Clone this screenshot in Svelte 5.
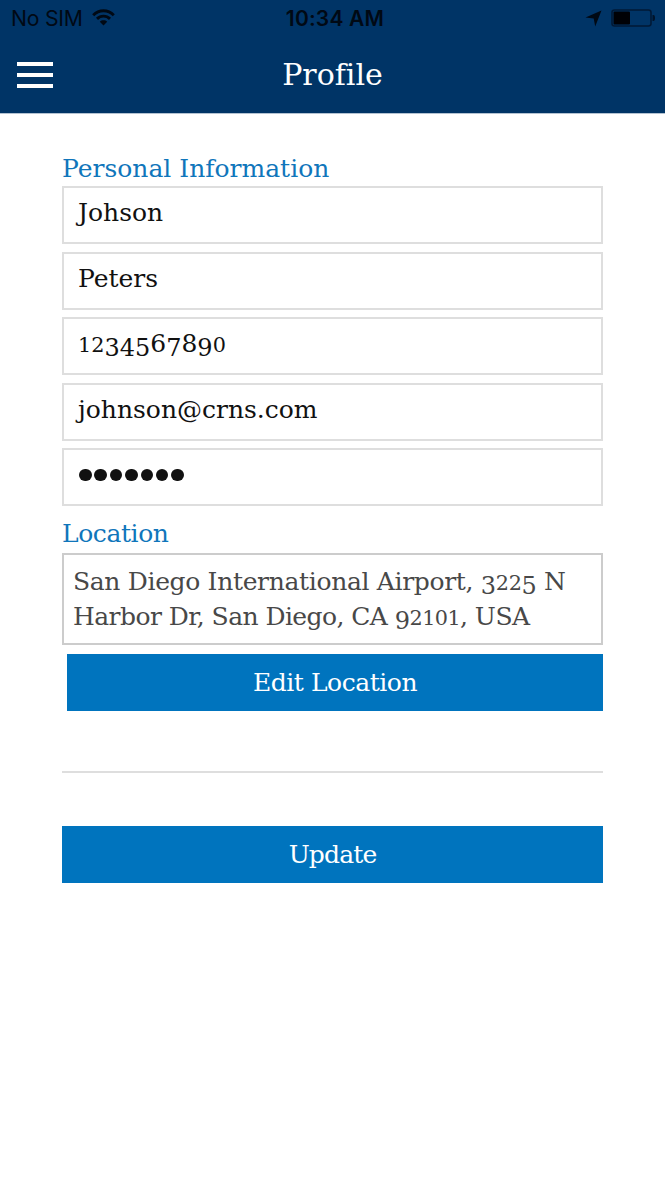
<script>
  const fields = ['Johson', 'Peters', '1234567890', 'johnson@crns.com'];
  const address = [
    { text: 'San Diego International Airport, 3225 N', spacing: -0.33 },
    { text: 'Harbor Dr, San Diego, CA 92101, USA', spacing: -0.56 },
  ];
  const dots = Array.from({ length: 7 });

  // Old-style figures: short 0-2, descending 3, 4, 5, 7 and 9.
  const kind = (c) => ('012'.includes(c) ? 'short' : '34579'.includes(c) ? 'low' : '68'.includes(c) ? 'tall' : '');
  const runs = (text) => text.match(/\d|\D+/g);
</script>

{#snippet figures(text)}{#each runs(text) as run}{#if kind(run[0]) && run.length === 1}<span class="digit {kind(run)}">{run}</span>{:else}{run}{/if}{/each}{/snippet}

<div class="screen">
  <header>
    <div class="status">
      <div class="carrier">
        <span>No SIM</span>
        <svg width="23" height="17" viewBox="0 0 23 17" fill="none" stroke="#000914" stroke-width="2.9">
          <path d="M1.200 6.200C7 .3 16 .3 21.800 6.200" />
          <path d="M5 9.900c3.700-3.700 9.300-3.700 13 0" />
          <path d="M11.500 16.400l-3.700-3.700c2-1.900 5.400-1.900 7.400 0z" fill="#000914" stroke="none" />
        </svg>
      </div>
      <time>10:34 AM</time>
      <div class="power">
        <svg width="17" height="17" viewBox="0 0 17 17"><path d="M16.500 .5L10.200 16.500 8.700 8.600 .5 7.600z" fill="#000914" /></svg>
        <svg width="44" height="18" viewBox="0 0 44 18">
          <rect x="1" y="1" width="39" height="16" rx="2.500" fill="none" stroke="#001936" stroke-width="1.600" />
          <rect x="2.500" y="2.500" width="16.500" height="13" rx="1" fill="#000106" />
          <path d="M41.500 6h1q1.500 0 1.500 3t-1.500 3h-1z" fill="#001329" />
        </svg>
      </div>
    </div>
    <div class="bar">
      <button class="menu" aria-label="Menu"><i></i><i></i><i></i></button>
      <h1>Profile</h1>
    </div>
  </header>

  <main>
    <h2 class="personal">Personal Information</h2>
    <div class="fields">
      {#each fields as text}
        <div class="field">{@render figures(text)}</div>
      {/each}
      <div class="field password">{#each dots as _}<i></i>{/each}</div>
    </div>
    <h2 class="location">Location</h2>
    <div class="address">
      {#each address as line}<div style="letter-spacing: {line.spacing}px">{@render figures(line.text)}</div>{/each}
    </div>
    <button class="action edit">Edit Location</button>
    <hr />
    <button class="action update">Update</button>
  </main>
</div>

<style>
  :global(body) { background: #fff; }
  .screen {
    width: 665px; height: 1182px; overflow: hidden; background: #fff;
    font-family: "DejaVu Serif", serif; font-size: 25px;
  }
  header { height: 114px; background: #003466; border-bottom: 1px solid #b3c2d1; box-sizing: border-box; }
  .status {
    height: 37px; display: grid; grid-template-columns: 1fr auto 1fr; align-items: center;
    padding: 0 10px 0 11px; box-sizing: border-box; color: #000914;
    font: 21.200px/37px Inter, sans-serif;
  }
  .carrier { display: flex; align-items: center; gap: 9px; letter-spacing: -0.250px; }
  .carrier svg { position: relative; top: -1px; }
  time { font-weight: 600; font-size: 21px; letter-spacing: 0.200px; padding-left: 4px; }
  .power { display: flex; justify-content: flex-end; align-items: center; gap: 9px; position: relative; top: -0.5px; }
  .bar { height: 76px; display: grid; grid-template-columns: 1fr auto 1fr; align-items: center; color: #fff; }
  button { border: 0; padding: 0; font: inherit; color: #fff; }
  .menu { width: 36px; margin-left: 17.400px; display: grid; gap: 6.700px; background: none; }
  .menu i { height: 4px; background: #fff; }
  h1 { margin: 0; font-size: 30px; font-weight: 400; line-height: 74px; font-variant-ligatures: none; }
  main { width: 541px; margin: -1px 0 0 62px; }
  h2 { margin: 0; font-size: 25px; font-weight: 400; color: #1076bb; }
  .personal { padding-top: 38px; height: 73px; box-sizing: border-box; line-height: 35px; }
  .fields { display: grid; gap: 7.600px; }
  .field {
    height: 58px; box-sizing: border-box; border: 2px solid #dedede; padding-left: 14px;
    line-height: 49px; color: #111;
  }
  .password { display: flex; gap: 2.900px; padding: 18.500px 0 0 15px; }
  .password i { width: 12.500px; height: 12.500px; border-radius: 50%; background: #111; }
  .location { margin-top: 9px; height: 37.600px; line-height: 37px; letter-spacing: -0.400px; }
  .address {
    height: 92px; box-sizing: border-box; border: 2px solid #ccc; padding: 9px 0 0 9px;
    color: #484848; line-height: 35.500px; white-space: nowrap;
  }
  .address div { height: 35.500px; }
  .digit { display: inline-block; line-height: 1; }
  .short { font-size: 0.830em; }
  .low { font-size: 0.960em; position: relative; top: 0.160em; }
  .tall { font-size: 1em; }
  .action { display: block; background: #0074be; height: 57px; line-height: 57px; text-align: center; }
  .edit { width: 536px; margin: 9px 0 0 5px; letter-spacing: -0.450px; }
  hr { border: 0; height: 2px; background: #dedede; margin: 60px 0 53px; }
  .update { width: 541px; letter-spacing: -0.850px; }
</style>
